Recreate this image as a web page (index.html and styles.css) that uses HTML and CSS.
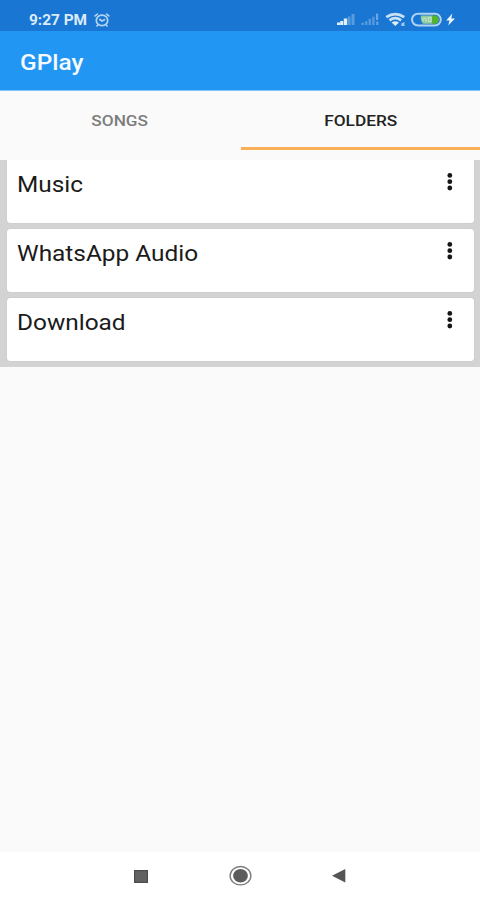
FILE: index.html
```html
<!DOCTYPE html>
<html lang="en">
<head>
<meta charset="utf-8">
<title>GPlay</title>
<link rel="stylesheet" href="styles.css">
</head>
<body>
<div class="screen">
  <div class="status">
    <div class="clock"><span class="wide">9:27 PM</span></div>
    <svg class="alarm" width="18" height="16" viewBox="0 0 18 16" fill="none" stroke="#b3d4f2" stroke-width="1.7" stroke-linecap="round">
      <ellipse cx="9" cy="8.4" rx="5.7" ry="5.2"/>
      <path d="M2.2 3.9 4.4 2.2M15.8 3.9 13.6 2.2M4.8 13 4 13.8M13.2 13 14 13.8M6.8 7.5 9 9 11.5 7.7"/>
    </svg>
    <svg class="indicators" width="122" height="18" viewBox="334 11 122 18">
      <g fill="#e4f0fa">
        <path d="M337 22.6h3v2.4h-3zM340.2 21h3v4h-3zM343.8 18.4h3.4V25h-3.4z"/>
        <path opacity=".32" d="M347.8 16.5h2.7V25h-2.7zM351.5 14h3v11h-3z"/>
        <path opacity=".3" d="M361.5 22.8h2.4V25h-2.4zM365 21.2h2.4V25H365zM368.6 18.7h2.4V25h-2.4zM372.2 16.8h2.4V25h-2.4z"/>
        <path opacity=".4" d="M376 13.5h2.2V20H376zM376.3 21.5h2V25h-2z"/>
      </g>
      <g fill="none" stroke="#c9e1f6" stroke-width="2.8">
        <path d="M386.3 17.2Q395.3 11 404.2 17.2"/>
        <path d="M389.5 20.3Q395.3 16 401.1 20.3"/>
      </g>
      <path fill="#dcecf9" d="M391.6 22.6q3.7-2.7 7.4 0L395.3 26z"/>
      <path fill="#9cc7ef" d="M401.3 23.4 404.5 22v4h-3.2z"/>
      <rect x="412" y="13.7" width="28.8" height="11.8" rx="5.9" fill="#1976d2" stroke="#b0d3f1" stroke-width="2"/>
      <path fill="#8fca9d" d="M421 15.5h12v8.2h-10q-3-4-2-8.2z"/>
      <path fill="#55b42d" d="M432 15.5h4q3 1.5 3 4.1t-3 4.1h-4z"/>
      <path fill="none" stroke="#bfe3c6" stroke-width="1.2" d="M423 21.5v-3.2h3v4M428.5 17.5h2.5v4h-2.5z"/>
      <path fill="#eaf4fd" d="M452.3 13.6 446.2 20.4h3.3L448.2 25.5 455 18.4h-3.7z"/>
    </svg>
  </div>
  <header class="appbar"><h1 class="wide">GPlay</h1></header>
  <nav class="tabs">
    <div class="tab"><span class="wide">SONGS</span></div>
    <div class="tab active"><span class="wide">FOLDERS</span></div>
  </nav>
  <main class="list">
    <div class="card first"><span class="name wide">Music</span><svg class="more" width="8" height="20" viewBox="0 0 8 20"><circle cx="3.8" cy="3.4" r="2.4"/><circle cx="3.8" cy="9.7" r="2.4"/><circle cx="3.8" cy="16" r="2.4"/></svg></div>
    <div class="card"><span class="name wide">WhatsApp Audio</span><svg class="more" width="8" height="20" viewBox="0 0 8 20"><circle cx="3.8" cy="3.4" r="2.4"/><circle cx="3.8" cy="9.7" r="2.4"/><circle cx="3.8" cy="16" r="2.4"/></svg></div>
    <div class="card"><span class="name wide">Download</span><svg class="more" width="8" height="20" viewBox="0 0 8 20"><circle cx="3.8" cy="3.4" r="2.4"/><circle cx="3.8" cy="9.7" r="2.4"/><circle cx="3.8" cy="16" r="2.4"/></svg></div>
  </main>
  <footer class="sysnav">
    <svg width="14" height="13" viewBox="0 0 14 13"><rect width="14" height="13" fill="#4c4c4c"/><rect x="1.2" y="1.2" width="11.6" height="10.6" fill="#626262"/></svg>
    <svg width="24" height="22" viewBox="0 0 24 22"><ellipse cx="12.5" cy="10.7" rx="10.4" ry="9.2" fill="none" stroke="#7d7d7d" stroke-width="1.4"/><ellipse cx="12.5" cy="10.7" rx="7.4" ry="6.7" fill="#5c5c5c"/></svg>
    <svg width="14" height="14" viewBox="0 0 14 14"><path d="M0 6.7 13.3 0v13.6z" fill="#555"/></svg>
  </footer>
</div>
</body>
</html>
```
FILE: styles.css
```css
* { box-sizing: border-box; }
body { margin: 0; font-family: Roboto, "Liberation Sans", sans-serif; }
svg { display: block; flex: none; }
.screen { width: 480px; height: 900px; display: flex; flex-direction: column; background: #fafafa; overflow: hidden; }
.wide { display: inline-block; white-space: nowrap; transform: scaleX(1.2); transform-origin: left center; }
.status { height: 31px; flex: none; display: flex; align-items: flex-start; background: #1976d2; padding-left: 29px; }
.clock { width: 64px; padding-top: 12px; font-size: 14px; line-height: 16px; font-weight: 700; color: #dcebf9; }
.clock .wide { transform: scaleX(1.1); }
.alarm { margin-top: 12px; }
.indicators { margin: 11px 24px 0 auto; }
.appbar { height: 60px; flex: none; background: #2196f3; border-bottom: 1px solid #85c4f7; padding: 17px 0 0 20px; }
.appbar h1 { margin: 0; font-size: 22px; line-height: 29px; font-weight: 500; color: #f5faff; transform: scaleX(1.11); }
.tabs { height: 69px; flex: none; display: flex; }
.tab { flex: 1; height: 59px; padding-top: 20px; text-align: center; font-size: 15px; line-height: 21px; font-weight: 500; color: #7d7d7d; }
.tab .wide { transform: scaleX(1.15); transform-origin: center; }
.tab.active { color: #222; border-bottom: 3px solid #f9b057; margin-left: 1px; }
.list { height: 207px; flex: none; display: flex; flex-direction: column; gap: 6px; padding: 0 6px 0 7px; background: #d3d3d3; overflow: hidden; }
.card { height: 63px; flex: none; display: flex; justify-content: space-between; align-items: flex-start; padding: 12px 20px 0 9.5px; background: #fff; border-radius: 3px; box-shadow: 0 0 1px #aaa; }
.card.first { border-radius: 0 0 3px 3px; }
.name { font-size: 21.5px; line-height: 25px; color: #1b1b1b; transform: scaleX(1.135); }
.more { fill: #151515; }
.sysnav { height: 48px; margin-top: auto; flex: none; display: flex; justify-content: space-between; align-items: center; padding: 0 134px; background: #fff; }
```
